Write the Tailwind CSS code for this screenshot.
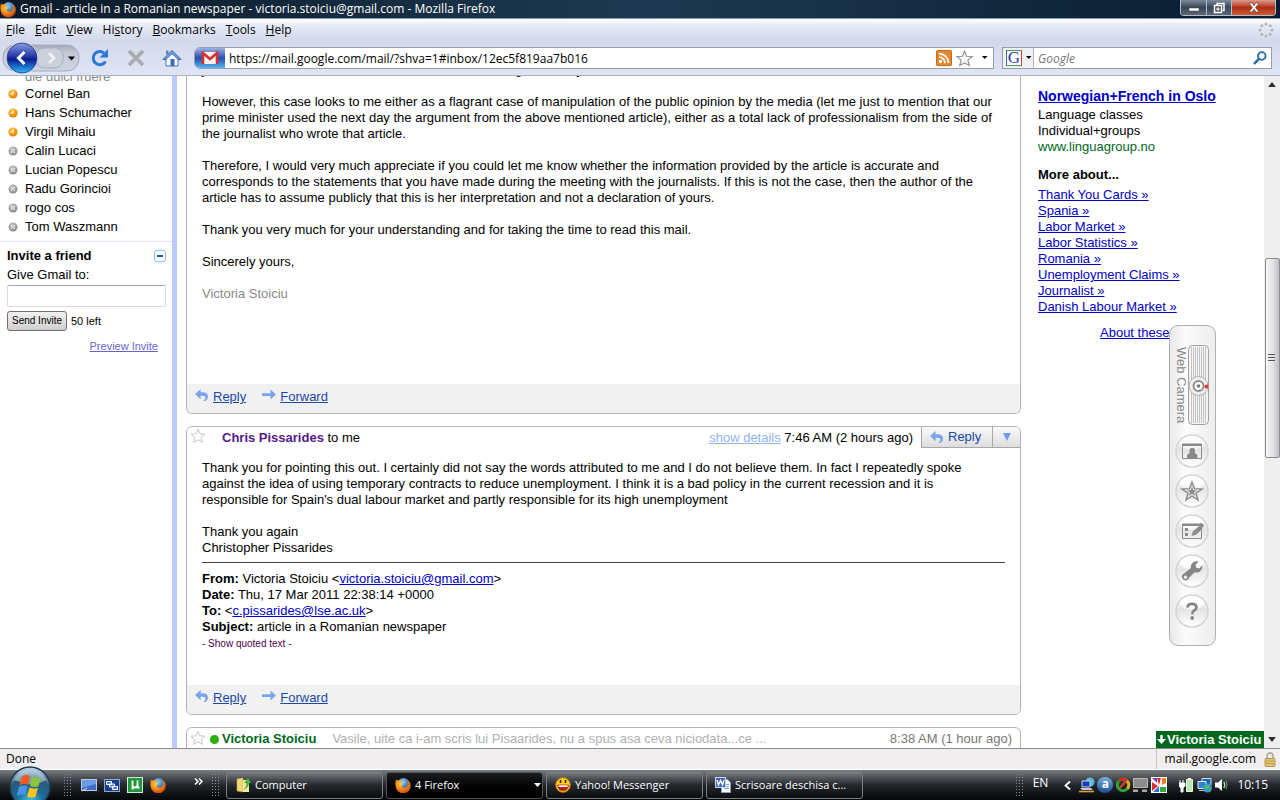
<!DOCTYPE html>
<html lang="en">
<head>
  <meta charset="UTF-8">
  <title>Gmail - article in a Romanian newspaper - victoria.stoiciu@gmail.com - Mozilla Firefox</title>
  <script src="https://cdn.jsdelivr.net/npm/@tailwindcss/browser@4"></script>
</head>
<body class="h-screen overflow-hidden flex flex-col bg-white text-black font-['Open_Sans',sans-serif] text-[12px]">

  <!-- shared icons -->
  <svg class="absolute size-0" aria-hidden="true">
    <defs>
      <radialGradient id="orange" cx="40%" cy="30%" r="75%"><stop offset="0" stop-color="#ffd23c"/><stop offset=".5" stop-color="#f88a1a"/><stop offset="1" stop-color="#c43c08"/></radialGradient>
      <radialGradient id="globe" cx="45%" cy="30%" r="70%"><stop offset="0" stop-color="#8fd0f5"/><stop offset="1" stop-color="#153a86"/></radialGradient>
      <radialGradient id="away" cx="40%" cy="30%" r="70%"><stop offset="0" stop-color="#ffc23a"/><stop offset="1" stop-color="#e88000"/></radialGradient>
      <radialGradient id="off" cx="40%" cy="30%" r="70%"><stop offset="0" stop-color="#c8c8c8"/><stop offset="1" stop-color="#8a8a8a"/></radialGradient>
      <linearGradient id="glass" x1="0" y1="0" x2="0" y2="1"><stop offset="0" stop-color="#ffffff"/><stop offset=".45" stop-color="#e4e4e4"/><stop offset="1" stop-color="#ffffff"/></linearGradient>
      <symbol id="firefox" viewBox="0 0 16 16">
        <circle cx="8.500" cy="7.500" r="6.500" fill="url(#globe)"/>
        <path d="M1 2.500Q2 3.500 3.500 3.500Q5 3 6.500 3.500Q5.500 4.500 6 5.500Q7 6.500 8.500 6.500Q7.500 8 6.500 8.200Q6.500 10.500 9 10.800Q12.500 11 12.800 7.500Q13.500 8 13.500 8.500Q13.800 5.500 12 3Q15.800 5 15.800 8.500A7.500 7.500 0 0 1 .6 9Q0 5.500 1 2.500Z" fill="url(#orange)"/>
      </symbol>
      <symbol id="star" viewBox="0 0 16 16"><path d="M8 1.200l2 4.600 5 .4-3.800 3.300 1.200 4.900L8 11.800l-4.400 2.600 1.200-4.900L1 6.200l5-.4z" fill="#fcfcfc" stroke="#c8c8c8"/></symbol>
      <symbol id="reply" viewBox="0 0 15 13"><path d="M6 0v3.600h2.500Q14 3.600 14 8.500Q14 11.500 11.300 13H9.200Q11.500 11 11.200 9Q10.900 7.200 8.500 7.200H6V11L0 5.500z" fill="#7aa5ee"/></symbol>
      <symbol id="forward" viewBox="0 0 14 11"><path d="M0 4.200h8.500V0.500L14 5.500 8.500 10.500V7H0z" fill="#7aa5ee"/></symbol>
      <symbol id="away-dot" viewBox="0 0 10 10"><circle cx="5" cy="5" r="4.600" fill="url(#away)"/><path d="M5 1.800V5H2.200" stroke="#fff" fill="none" stroke-width="1.100"/></symbol>
      <symbol id="off-dot" viewBox="0 0 10 10"><circle cx="5" cy="5" r="4.500" fill="url(#off)"/><path d="M3.300 3.300l3.400 3.400M6.700 3.300L3.300 6.700" stroke="#fff" stroke-width="1.100" stroke-dasharray="1.200 .7"/></symbol>
      <symbol id="bubble" viewBox="0 0 34 34">
        <circle cx="17" cy="17" r="16" fill="url(#glass)" stroke="#d6d6d6" stroke-width="1.600"/>
        <ellipse cx="17" cy="9" rx="12" ry="6.500" fill="#fff" opacity=".7"/>
      </symbol>
    </defs>
  </svg>

  <!-- title bar -->
  <header class="h-[19px] shrink-0 flex items-center justify-between bg-gradient-to-r from-[#0c1a28] via-[#1c3a52] to-[#0a1c30] border-b border-[#8b98a8] text-white overflow-hidden">
    <div class="flex items-center gap-1 h-full">
      <svg class="size-4"><use href="#firefox"/></svg>
      <h1 class="leading-[18px]">Gmail - article in a Romanian newspaper - victoria.stoiciu@gmail.com - Mozilla Firefox</h1>
    </div>
    <div class="flex self-start h-4 mr-1 rounded-b-[4px] border border-t-0 border-[#b4bcc6] overflow-hidden">
      <button aria-label="Minimize" class="w-[26px] flex items-center justify-center bg-gradient-to-b from-[#7e8a98] via-[#38465a] to-[#5a6878] border-r border-[#b4bcc6]">
        <svg width="12" height="12"><rect x="1" y="6" width="10" height="3" fill="#fff" stroke="#444" stroke-width=".5"/></svg>
      </button>
      <button aria-label="Restore" class="w-[25px] flex items-center justify-center bg-gradient-to-b from-[#7e8a98] via-[#38465a] to-[#5a6878] border-r border-[#b4bcc6]">
        <svg width="12" height="12" fill="none" stroke="#fff" stroke-width="1.500"><path d="M4 3V1.500h7v7H9.500"/><rect x="1.500" y="3.500" width="7" height="7"/><path d="M4 6h2v2H4z" stroke-width="1"/></svg>
      </button>
      <button aria-label="Close" class="w-[43px] flex items-center justify-center bg-gradient-to-b from-[#dc9a8c] via-[#b02c14] to-[#cc5a34]">
        <svg width="12" height="11"><path d="M1 1h3l2 2.700L8 1h3L7.600 5.500 11 10H8L6 7.300 4 10H1l3.400-4.500z" fill="#fff" stroke="#502018" stroke-width=".5"/></svg>
      </button>
    </div>
  </header>

  <!-- menu -->
  <nav class="h-[22px] shrink-0 flex items-center justify-between pl-[6px] pr-[6px] bg-gradient-to-b from-white via-[#e6eaf6] via-30% to-[#d3d9ec]">
    <div class="flex gap-[10px] leading-4">
      <button><u>F</u>ile</button>
      <button><u>E</u>dit</button>
      <button><u>V</u>iew</button>
      <button>Hi<u>s</u>tory</button>
      <button><u>B</u>ookmarks</button>
      <button><u>T</u>ools</button>
      <button><u>H</u>elp</button>
    </div>
    <svg class="size-4" viewBox="0 0 16 16" fill="#b4b6bc"><circle cx="8" cy="2" r="1.500"/><circle cx="12.200" cy="3.800" r="1.500"/><circle cx="14" cy="8" r="1.500"/><circle cx="12.200" cy="12.200" r="1.500"/><circle cx="8" cy="14" r="1.500"/><circle cx="3.800" cy="12.200" r="1.500"/><circle cx="2" cy="8" r="1.500"/><circle cx="3.800" cy="3.800" r="1.500"/></svg>
  </nav>

  <!-- toolbar -->
  <div class="h-[35px] shrink-0 flex items-center pl-[2px] pr-2 bg-gradient-to-b from-[#d3d9ec] to-[#e0e5f5] border-b border-[#a9b0c4]">
    <div class="flex items-center">
      <svg width="80" height="34" viewBox="0 0 80 34">
        <defs>
          <linearGradient id="back" x1="0" y1="0" x2="0" y2="1"><stop offset="0" stop-color="#8aa0e0"/><stop offset=".45" stop-color="#2438a8"/><stop offset=".55" stop-color="#0a1c90"/><stop offset="1" stop-color="#2cc4ff"/></linearGradient>
          <linearGradient id="pill" x1="0" y1="0" x2="0" y2="1"><stop offset="0" stop-color="#a4aabb"/><stop offset=".3" stop-color="#c2c8d6"/><stop offset="1" stop-color="#cfd5e4"/></linearGradient>
        </defs>
        <rect x="1" y="4" width="76" height="26" rx="12" fill="url(#pill)" stroke="#a6adbe"/>
        <rect x="34" y="7" width="27" height="20" rx="8" fill="#ccd0da" stroke="#aab0be"/>
        <circle cx="20" cy="17" r="15.500" fill="url(#back)" stroke="#e8ecf8" stroke-width="1"/>
        <circle cx="20" cy="17" r="15" fill="none" stroke="#1c2c78" stroke-width=".8"/>
        <path d="M22.500 11l-6 6 6 6" stroke="#fff" stroke-width="3" fill="none"/>
        <path d="M47 12l5 5-5 5" stroke="#eef0f6" stroke-width="3" fill="none"/>
        <path d="M66 15.500h7l-3.500 4z" fill="#000"/>
      </svg>
      <button aria-label="Reload" class="ml-[8px]">
        <svg width="20" height="20" viewBox="0 0 20 20"><path d="M15.500 13.500A6.600 6.600 0 1 1 14 5" fill="none" stroke="#2a78d8" stroke-width="3"/><path d="M18 1v8.500H9.500z" fill="#2a78d8"/></svg>
      </button>
      <button aria-label="Stop" class="ml-[16px]">
        <svg width="20" height="20" viewBox="0 0 20 20"><path d="M3 3l14 14M17 3L3 17" stroke="#a8aaae" stroke-width="3.600"/></svg>
      </button>
      <button aria-label="Home" class="ml-[16px]">
        <svg width="20" height="18" viewBox="0 0 20 18"><path d="M4 8.500L10 3l6 5.500V17H4z" fill="#fff" stroke="#4a72b8"/><path d="M4 1.500h2.500v4H4z" fill="#5a86c8"/><path d="M.8 10.500L10 1.500l9.200 9h-3L10 4.800l-6.200 5.700z" fill="#6aa0de" stroke="#2c5ca8" stroke-width=".8"/><path d="M8.500 10h4v7h-4z" fill="#3c6cb4"/></svg>
      </button>
    </div>
    <div class="flex flex-1 items-center h-[22px] ml-3 bg-white border border-[#9a9ea8] rounded-l-[6px] overflow-hidden">
      <div class="w-[30px] h-full flex items-center justify-center bg-gradient-to-b from-[#9cb0e0] via-[#2a4cb0] to-[#58b4ee]">
        <svg width="18" height="14" viewBox="0 0 18 14"><rect x="1" y="1" width="16" height="12" rx="1" fill="#f4f4f4"/><path d="M2 13V2l7 6 7-6v11" fill="none" stroke="#d8302c" stroke-width="2.600"/></svg>
      </div>
      <input type="text" aria-label="Address" value="https://mail.google.com/mail/?shva=1#inbox/12ec5f819aa7b016" class="flex-1 min-w-0 h-full pl-1 leading-5 outline-none">
      <svg width="16" height="16" viewBox="0 0 16 16"><rect width="16" height="16" rx="2" fill="#e8862c"/><rect x=".5" y=".5" width="15" height="15" rx="2" fill="none" stroke="#c8681c"/><circle cx="4.500" cy="11.500" r="1.700" fill="#fff"/><path d="M3 7.200a6 6 0 0 1 6 6M3 3.600a9.500 9.500 0 0 1 9.500 9.500" fill="none" stroke="#fff" stroke-width="1.800"/></svg>
      <svg class="ml-1" width="17" height="17" viewBox="0 0 16 16"><path d="M8 1l2 4.800 5.200.4-4 3.400 1.300 5L8 12l-4.500 2.600 1.300-5-4-3.400L6 5.800z" fill="#f6f6f6" stroke="#8a8c90"/></svg>
      <svg class="ml-[9px] mr-[5px]" width="6" height="4"><path d="M0 0h5.500L2.700 3z"/></svg>
    </div>
    <div class="flex items-center w-[270px] h-[22px] ml-2 bg-white border border-[#9a9ea8]">
      <button class="flex items-center gap-1 w-[31px] h-full pl-[3px] bg-[#f0f1f5] border-r border-[#b0b4bc]" aria-label="Search engine">
        <span class="size-4 shrink-0 bg-white border border-t-[#4a9c50] border-l-[#3a6cc8] border-r-[#c83c3c] border-b-[#4a9c50] font-['Liberation_Serif',serif] text-[17px] leading-[14px] text-[#1c3cb0]">G</span>
        <svg width="6" height="4"><path d="M0 0h5.500L2.700 3z"/></svg>
      </button>
      <input type="text" aria-label="Search" placeholder="Google" class="flex-1 min-w-0 h-full pl-1 leading-5 outline-none italic placeholder:text-[#777777]">
      <svg class="mr-1" width="14" height="14" viewBox="0 0 14 14"><circle cx="8.800" cy="5" r="3.800" fill="#eef6fc" stroke="#2c6ca8" stroke-width="1.800"/><path d="M6 7.800L1 12.800" stroke="#2c6ca8" stroke-width="2.600"/></svg>
    </div>
  </div>

  <!-- page -->
  <div class="relative flex-1 min-h-0 flex overflow-hidden font-['Liberation_Sans',sans-serif] text-[13px] leading-4">

    <aside class="w-[177px] shrink-0 border-r-[5px] border-[#bccbff]">
      <ul class="-mt-2 leading-[19px] pb-[5px] border-b border-[#dfe8f6]">
        <li class="pl-[25px] h-4 leading-[18px] text-[#888888]">die dulci fruere</li>
        <li class="flex items-center gap-[7px] pl-2"><svg class="size-[10px]"><use href="#away-dot"/></svg>Cornel Ban</li>
        <li class="flex items-center gap-[7px] pl-2"><svg class="size-[10px]"><use href="#away-dot"/></svg>Hans Schumacher</li>
        <li class="flex items-center gap-[7px] pl-2"><svg class="size-[10px]"><use href="#away-dot"/></svg>Virgil Mihaiu</li>
        <li class="flex items-center gap-[7px] pl-2"><svg class="size-[10px]"><use href="#off-dot"/></svg>Calin Lucaci</li>
        <li class="flex items-center gap-[7px] pl-2"><svg class="size-[10px]"><use href="#off-dot"/></svg>Lucian Popescu</li>
        <li class="flex items-center gap-[7px] pl-2"><svg class="size-[10px]"><use href="#off-dot"/></svg>Radu Gorincioi</li>
        <li class="flex items-center gap-[7px] pl-2"><svg class="size-[10px]"><use href="#off-dot"/></svg>rogo cos</li>
        <li class="flex items-center gap-[7px] pl-2"><svg class="size-[10px]"><use href="#off-dot"/></svg>Tom Waszmann</li>
      </ul>
      <form class="pl-[7px] pr-[6px] pt-[6px]">
        <div class="flex items-center justify-between">
          <h2 class="font-bold leading-4">Invite a friend</h2>
          <button type="button" aria-label="Collapse" class="size-3 flex items-center justify-center border border-[#9dbdf0] rounded-[2px]"><span class="w-[6px] h-[2px] bg-[#0a5cd8]"></span></button>
        </div>
        <label for="invite" class="block mt-[3px] leading-4">Give Gmail to:</label>
        <input id="invite" type="text" class="block w-full h-[22px] mt-[2px] px-1 border border-[#d8dadc] border-t-[#a4a8ac] rounded-[2px]">
        <div class="flex items-center gap-1 mt-1 text-[11px]">
          <button type="button" class="w-[60px] h-5 border border-[#707070] rounded-[3px] bg-gradient-to-b from-[#f2f2f2] to-[#cfcfcf] text-[10px]">Send Invite</button>
          <span>50 left</span>
        </div>
        <a href="#" class="block mt-[7px] mr-2 text-right text-[11px] underline text-[#6666cc]">Preview Invite</a>
      </form>
    </aside>

    <main class="flex-1 min-w-0 pl-[9px] pr-[17px]">
      <article class="border border-t-0 border-[#b4b4b4] rounded-b-[6px] overflow-hidden">
        <div class="-mt-[14px] px-[15px] h-[322px]">
          <p>journalist wrote that this was a statement in the meeting about any</p>
          <p class="mt-4">However, this case looks to me either as a flagrant case of manipulation of the public opinion by the media (let me just to mention that our<br>prime minister used the next day the argument from the above mentioned article), either as a total lack of professionalism from the side of<br>the journalist who wrote that article.</p>
          <p class="mt-4">Therefore, I would very much appreciate if you could let me know whether the information provided by the article is accurate and<br>corresponds to the statements that you have made during the meeting with the journalists. If this is not the case, then the author of the<br>article has to assume publicly that this is her interpretation and not a declaration of yours.</p>
          <p class="mt-4">Thank you very much for your understanding and for taking the time to read this mail.</p>
          <p class="mt-4">Sincerely yours,</p>
          <p class="mt-4 text-[#888888]">Victoria Stoiciu</p>
        </div>
        <div class="flex h-[29px] pt-1 pl-2 bg-[#f1f1f1] text-[#1b4aa8]">
          <a href="#" class="flex gap-1"><svg class="mt-px" width="14" height="12"><use href="#reply"/></svg><span class="underline leading-[17px]">Reply</span></a>
          <a href="#" class="flex gap-1 ml-4"><svg class="mt-px" width="14" height="11"><use href="#forward"/></svg><span class="underline leading-[17px]">Forward</span></a>
        </div>
      </article>

      <article class="mt-3 border border-[#b4b4b4] rounded-[6px] overflow-hidden">
        <div class="flex h-[21px] pl-[3px]">
          <svg class="mt-[1px] size-4"><use href="#star"/></svg>
          <h3 class="ml-4 leading-[21px]"><b class="text-[#551a8b]">Chris Pissarides</b> to me</h3>
          <span class="ml-auto mr-2 leading-[21px]"><a href="#" class="underline text-[#8fb4ee]">show details</a> 7:46 AM (2 hours ago)</span>
          <button class="flex items-center gap-1 w-[71px] pl-2 border-l border-b border-[#a8a8a8] bg-gradient-to-b from-[#fafafa] to-[#dedede] text-[#1b4aa8]"><svg width="14" height="12"><use href="#reply"/></svg>Reply</button>
          <button aria-label="More" class="w-7 flex items-center justify-center border-l border-b border-[#a8a8a8] bg-gradient-to-b from-[#fafafa] to-[#dedede]"><svg width="8" height="8"><path d="M0 0h8L4 8z" fill="#6c9cf0"/></svg></button>
        </div>
        <div class="px-[15px] pt-3 h-[237px]">
          <p>Thank you for pointing this out. I certainly did not say the words attributed to me and I do not believe them. In fact I repeatedly spoke<br>against the idea of using temporary contracts to reduce unemployment. I think it is a bad policy in the current recession and it is<br>responsible for Spain's dual labour market and partly responsible for its high unemployment</p>
          <p class="mt-4">Thank you again<br>Christopher Pissarides</p>
          <hr class="mt-[6px] mb-2 border-[#444444]">
          <p><b>From:</b> Victoria Stoiciu &lt;<a href="#" class="underline text-[#0000cc]">victoria.stoiciu@gmail.com</a>&gt;<br><b>Date:</b> Thu, 17 Mar 2011 22:38:14 +0000<br><b>To:</b> &lt;<a href="#" class="underline text-[#0000cc]">c.pissarides@lse.ac.uk</a>&gt;<br><b>Subject:</b> article in a Romanian newspaper</p>
          <button class="block text-[10px] leading-[18px] text-[#500050]">- Show quoted text -</button>
        </div>
        <div class="flex h-[29px] pt-1 pl-2 bg-[#f1f1f1] text-[#1b4aa8]">
          <a href="#" class="flex gap-1"><svg class="mt-px" width="14" height="12"><use href="#reply"/></svg><span class="underline leading-[17px]">Reply</span></a>
          <a href="#" class="flex gap-1 ml-4"><svg class="mt-px" width="14" height="11"><use href="#forward"/></svg><span class="underline leading-[17px]">Forward</span></a>
        </div>
      </article>

      <article class="mt-3 h-10 flex border border-[#b4b4b4] rounded-t-[6px] pl-[3px] pr-2 leading-[22px]">
        <svg class="mt-[2px] size-4"><use href="#star"/></svg>
        <span class="ml-1 mt-[7px] size-[9px] rounded-full bg-[#2ab010]"></span>
        <b class="ml-[3px] text-[#00681c]">Victoria Stoiciu</b>
        <span class="ml-4 text-[#b0b0b0]">Vasile, uite ca i-am scris lui Pisaarides, nu a spus asa ceva niciodata...ce ...</span>
        <span class="ml-auto text-[#777777]">8:38 AM (1 hour ago)</span>
      </article>
    </main>

    <aside class="w-[226px] shrink-0 pt-3 overflow-hidden text-[#0000cc]">
      <a href="#" class="block mb-[3px] font-bold text-[14px] underline">Norwegian+French in Oslo</a>
      <p class="text-black">Language classes<br>Individual+groups</p>
      <p class="text-[#00681c]">www.linguagroup.no</p>
      <h2 class="mt-3 mb-1 font-bold text-black">More about...</h2>
      <ul class="underline">
        <li><a href="#">Thank You Cards »</a></li>
        <li><a href="#">Spania »</a></li>
        <li><a href="#">Labor Market »</a></li>
        <li><a href="#">Labor Statistics »</a></li>
        <li><a href="#">Romania »</a></li>
        <li><a href="#">Unemployment Claims »</a></li>
        <li><a href="#">Journalist »</a></li>
        <li><a href="#">Danish Labour Market »</a></li>
      </ul>
      <a href="#" class="block mt-[10px] ml-[62px] underline">About these</a>
    </aside>

    <!-- scrollbar -->
    <div class="w-4 shrink-0 flex flex-col items-center bg-[#efefef]">
      <svg class="mt-[6px]" width="8" height="5"><path d="M0 5h8L4 0z" fill="#333"/></svg>
      <div class="w-[15px] h-[200px] mt-[171px] flex items-center justify-center border border-[#8e8e8e] rounded-[2px] bg-gradient-to-r from-[#f6f6f6] via-[#e4e4e6] to-[#bfc0c4]">
        <svg width="8" height="8" stroke="#555"><path d="M0 .5h7M0 3.500h7M0 6.500h7"/></svg>
      </div>
      <svg class="mt-auto mb-[6px]" width="8" height="5"><path d="M0 0h8L4 5z" fill="#333"/></svg>
    </div>

    <!-- webcam panel floating over the page -->
    <div class="absolute right-16 top-[249px] w-[47px] h-[321px] pr-[2px] flex flex-col items-center border border-[#b0b0b0] rounded-[9px] bg-gradient-to-r from-[#e9e9e9] via-[#fcfcfc] via-35% to-[#ededed]">
      <div class="flex items-center mt-[19px] h-20">
        <span class="[writing-mode:vertical-rl] text-[13px] leading-[14px] text-[#888888]">Web Camera</span>
        <svg width="21" height="80" viewBox="0 0 21 80">
          <rect x=".5" y=".5" width="20" height="79" rx="4" fill="#f4f4f4" stroke="#a0a0a0"/>
          <path d="M3.500 2v76M5.500 2v76M7.500 2v76M9.500 2v76M11.500 2v76M13.500 2v76M15.500 2v76M17.500 2v76" stroke="#c4c4c4"/>
          <circle cx="10.500" cy="41" r="9.500" fill="#eeeeee" stroke="#b0b0b0"/>
          <circle cx="10.500" cy="41" r="5" fill="#fff" stroke="#8a8a8a" stroke-width="1.800"/>
          <circle cx="10.500" cy="41" r="1.700" fill="#777"/>
          <circle cx="18.500" cy="41.500" r="2" fill="#f03030"/>
        </svg>
      </div>
      <div class="flex flex-col gap-[6px] mt-[9px]">
        <button aria-label="Snapshot"><svg class="block" width="34" height="34" viewBox="0 0 34 34"><use href="#bubble"/><path d="M7.500 10.500h19v14h-19z" fill="none" stroke="#8a8a8a"/><path d="M7 9.500h20v2.500H7zM12 24.500v-3.500l2.500-2v-3a2.800 2.800 0 0 1 5.500 0v3l2.500 2v3.500z" fill="#8a8a8a"/></svg></button>
        <button aria-label="Effects"><svg class="block" width="34" height="34" viewBox="0 0 34 34"><use href="#bubble"/><path d="M17 8l2.500 6.600 7.500.4-6 4.300 2 6.700-6-3.800-6 3.800 2-6.700-6-4.300 7.500-.4z" fill="#e8e8e8" stroke="#8a8a8a" stroke-width="1.400"/><path d="M17 12.500l1.300 3.800h3.600L19 18.500l1.200 3.500-3.200-2.200-3.200 2.200 1.200-3.500-2.900-2.200h3.600z" fill="#8a8a8a"/></svg></button>
        <button aria-label="Edit"><svg class="block" width="34" height="34" viewBox="0 0 34 34"><use href="#bubble"/><path d="M7.500 10.500h19v14h-19z" fill="none" stroke="#8a8a8a"/><path d="M7 9.500h19v2.500H7zM10 14h3v3h-3zM10 19h3v3h-3z" fill="#8a8a8a"/><path d="M16 22.500l1.500-5 7-6 3.500 3.500-7 6z" fill="#8a8a8a" stroke="#eee" stroke-width=".6"/><circle cx="26.500" cy="11.500" r="2.200" fill="#8a8a8a"/></svg></button>
        <button aria-label="Settings"><svg class="block" width="34" height="34" viewBox="0 0 34 34"><use href="#bubble"/><path d="M23.500 7.500l-3 3.500.8 2.800 3 .7 2.900-3.200a6 6 0 0 1-7.600 7l-5.500 5.500a3.700 3.700 0 1 1-4.600-4.600l6.300-5.200a6 6 0 0 1 7.700-6.500z" fill="#858585"/><circle cx="10.500" cy="23.200" r="1.700" fill="#f4f4f4"/></svg></button>
        <button aria-label="Help"><svg class="block" width="34" height="34" viewBox="0 0 34 34"><use href="#bubble"/><path d="M12.500 13.500Q12.800 9.800 17 9.800T21.500 13.300Q21.500 15 19.300 16.400Q17.200 17.600 17.200 20.200" fill="none" stroke="#858585" stroke-width="2.800"/><circle cx="17.200" cy="24" r="1.900" fill="#858585"/></svg></button>
      </div>
    </div>

    <!-- chat tab -->
    <button class="absolute bottom-0 right-4 w-[108px] h-[17px] flex items-center gap-[1px] pl-[1px] overflow-hidden bg-[#00681c] text-white font-bold whitespace-nowrap"><svg class="shrink-0" width="9" height="9"><path d="M3.300 0h2.400v4H9L4.500 9 0 4h3.300z" fill="#fff"/></svg>Victoria Stoiciu</button>
  </div>

  <!-- status bar -->
  <div class="h-[22px] shrink-0 flex items-stretch justify-between bg-[#f0eeee] border-t border-[#8c8c8c] border-b border-b-white leading-5 pl-[6px] pr-1">
    <span>Done</span>
    <div class="flex items-center gap-2 pl-2 border-l border-[#c8c6c6]">
      <span>mail.google.com</span>
      <svg width="12" height="15" viewBox="0 0 12 15"><path d="M3 7V4a3 3 0 0 1 6 0v3" fill="none" stroke="#b8b09a" stroke-width="1.800"/><rect x="1" y="6.500" width="10" height="8" rx="1" fill="#e0c070" stroke="#a88840" stroke-width=".8"/><path d="M1.500 9h9M1.500 11.500h9" stroke="#b89850" stroke-width=".8"/></svg>
    </div>
  </div>

  <!-- taskbar -->
  <footer class="relative h-[30px] shrink-0 flex items-center justify-between pr-3 bg-gradient-to-b from-[#7a7e82] via-[#24282c] via-50% to-[#050608] text-white">
    <div class="flex items-center">
      <button aria-label="Start" class="ml-2 w-11 h-[30px]">
        <svg class="absolute bottom-[-8px]" width="44" height="42" viewBox="0 0 44 42">
          <defs><radialGradient id="orb" cx="50%" cy="90%" r="85%"><stop offset="0" stop-color="#40d0e8"/><stop offset=".4" stop-color="#1c6c9c"/><stop offset=".75" stop-color="#2a5878"/><stop offset="1" stop-color="#b4d0e0"/></radialGradient></defs>
          <circle cx="22" cy="21" r="20" fill="url(#orb)" stroke="#20384c" stroke-width="1.500"/>
          <path d="M6 14Q12 3.500 22 3.500T38 14Q30 19 22 18T6 14z" fill="#cfe4f0" opacity=".5"/>
          <path d="M14 10.500q4-2.500 8-.5l-2 9q-4-2-8.500.5z" fill="#ee5a24"/>
          <path d="M24 11q4 2 9 0l-2.500 9q-4.500 2-8.500-.3z" fill="#8cc43c"/>
          <path d="M11 21q4-2.500 8.500-.5l-2.300 9q-4-2-8.500.5z" fill="#4a94e8"/>
          <path d="M21.500 21.500q4 2 8.500.2l-2.500 9q-4 2-8.500-.3z" fill="#fcc41c"/>
        </svg>
      </button>
      <svg class="ml-[11px]" width="10" height="22" stroke="#8a8e92" stroke-dasharray="1 2"><path d="M1.500 0v22M4.500 0v22M7.500 0v22"/></svg>
      <svg class="ml-2" width="16" height="13"><rect x=".5" y=".5" width="15" height="11" fill="#3c6cc4" stroke="#b8c8e0"/><path d="M1 1h14v4L1 9z" fill="#6c9ce4"/><path d="M1 12l5-3" stroke="#ddd"/></svg>
      <svg class="ml-[7px]" width="16" height="13"><rect x=".5" y=".5" width="15" height="12" fill="#1c3c88" stroke="#88a8d8"/><path d="M2.500 2.500h5v3h-5zM5.500 5h5v3h-5zM8.500 7.500h5v3h-5z" fill="#4c7cd0" stroke="#fff"/></svg>
      <svg class="ml-[7px]" width="16" height="16"><rect x=".5" y=".5" width="15" height="15" fill="#1c9838" stroke="#d8e8d8"/><path d="M5.500 3.500v9M5.500 8.500q0 2 2.300 2t2.700-2.500V3.500v7h2" fill="none" stroke="#fff" stroke-width="1.800"/></svg>
      <svg class="ml-[7px] size-4"><use href="#firefox"/></svg>
      <svg class="ml-7 -mt-2" width="9" height="7" fill="none" stroke="#fff" stroke-width="1.500"><path d="M1 .5l3 3-3 3M5 .5l3 3-3 3"/></svg>
      <svg class="ml-2" width="10" height="22" stroke="#8a8e92" stroke-dasharray="1 2"><path d="M1.500 0v22M4.500 0v22M7.500 0v22"/></svg>
      <div class="flex gap-[3px] ml-[5px] text-[11px]">
        <button class="flex items-center gap-1 w-[157px] h-[27px] px-2 rounded-[3px] border border-[#7c8084] bg-gradient-to-b from-[#74787c] via-[#24282c] via-50% to-[#0c0e10]">
          <svg width="16" height="16"><path d="M2 2l6-1v14l-6-1z" fill="#f0d878" stroke="#c8a848" stroke-width=".6"/><path d="M8 3h6v12H8z" fill="#f8e8a0"/><path d="M8 13q4-3 3-7H9l4-5 3 5h-2q0 5-6 7z" fill="#48b838"/></svg>Computer
        </button>
        <button class="flex items-center gap-1 w-[157px] h-[27px] pl-2 rounded-[3px] border border-[#505458] bg-gradient-to-b from-[#1c1e20] to-[#000000]">
          <svg class="size-4"><use href="#firefox"/></svg>4 Firefox
          <svg class="ml-auto" width="8" height="5"><path d="M0 0h7L3.500 4z" fill="#fff"/></svg>
        </button>
        <button class="flex items-center gap-1 w-[157px] h-[27px] px-2 rounded-[3px] border border-[#7c8084] bg-gradient-to-b from-[#74787c] via-[#24282c] via-50% to-[#0c0e10]">
          <svg width="16" height="16"><circle cx="8" cy="8" r="7.300" fill="#fcd020" stroke="#c87808"/><path d="M2.500 8h11q-.5 5.500-5.500 5.500T2.500 8z" fill="#c81c1c" stroke="#701010" stroke-width=".6"/><path d="M3.300 8.300h9.400v1.700H3.300z" fill="#fff"/><path d="M5.500 3v3M10.500 3v3" stroke="#402000" stroke-width="1.600"/></svg>Yahoo! Messenger
        </button>
        <button class="flex items-center gap-1 w-[157px] h-[27px] px-2 rounded-[3px] border border-[#7c8084] bg-gradient-to-b from-[#74787c] via-[#24282c] via-50% to-[#0c0e10] whitespace-nowrap">
          <svg width="16" height="16"><path d="M6.500 2.500h6l3 3v10h-9z" fill="#fff" stroke="#88a0d0"/><path d="M9 7.500h5M9 9.500h5M9 11.500h5" stroke="#88a0d0"/><rect x=".5" y=".5" width="10" height="10" fill="#3c64b8" stroke="#c8d8f4"/><path d="M2 3l1.500 5L5.500 3.500 7.500 8 9 3" fill="none" stroke="#fff" stroke-width="1.400"/></svg>Scrisoare deschisa c...
        </button>
      </div>
    </div>
    <div class="flex items-center">
      <svg width="10" height="22" stroke="#8a8e92" stroke-dasharray="1 2"><path d="M1.500 0v22M4.500 0v22M7.500 0v22"/></svg>
      <span class="ml-2 text-[12px] leading-4 pb-1">EN</span>
      <svg class="ml-4" width="7" height="9"><path d="M6 .5l-4.500 4 4.500 4" fill="none" stroke="#fff" stroke-width="1.800"/></svg>
      <svg class="ml-2" width="16" height="16"><circle cx="11" cy="5" r="4.500" fill="#50c0d8"/><path d="M3 4h8v6H3z" fill="#1c3cc0" stroke="#c8d4e8"/><path d="M1 11h11l2 2H3z" fill="#c0c8d8"/><path d="M0 14.500h15" stroke="#e0a030" stroke-width="1.600"/></svg>
      <span class="ml-[2px] size-4 rounded-full bg-gradient-to-b from-[#7cb0e0] to-[#1c4c90] text-center font-bold leading-[14px]">a</span>
      <svg class="ml-[2px]" width="16" height="16" fill="none" stroke-width="3"><path d="M8 2.500A5.500 5.500 0 0 1 12 12" stroke="#e0b020"/><path d="M12 12A5.500 5.500 0 0 1 4 4" stroke="#28a838"/><path d="M4 4a5.500 5.500 0 0 1 8-.2" stroke="#d82c20"/><path d="M4.500 11l6-6" stroke="#e83c28" stroke-width="2"/></svg>
      <svg class="ml-[2px]" width="15" height="14"><path d="M.5 .5h14v9H.5z" fill="#8c8c8c" stroke="#b8b8b8"/><path d="M0 11.500h5v2.500H0zM9 11.500h5v2.500H9z" fill="#a8a8a8"/></svg>
      <svg class="ml-[3px]" width="16" height="16"><rect width="16" height="16" fill="#fff"/><path d="M1 1h5v5z" fill="#8838c0"/><path d="M6 1h4L8 8z" fill="#e02828"/><path d="M11 1h4v5l-4 2z" fill="#f08020"/><path d="M1 5l6 4-6 5z" fill="#e03030"/><path d="M2 15l6-6v6z" fill="#3070e0"/><path d="M9 10h6v5H9z" fill="#38a840"/></svg>
      <svg class="ml-3" width="16" height="16"><path d="M7.500 2.500h6v12h-6z" fill="#b8e8b0" stroke="#e8f0e8"/><path d="M9 1h3v2H9z" fill="#fff"/><path d="M1 3v3M4 3v3M0 6h6v3l-2 2v4H2v-4L0 9z" stroke="#fff" fill="#fff"/></svg>
      <svg class="ml-[2px]" width="16" height="16"><path d="M5 1.500h9v7H5z" fill="#1c64b8" stroke="#c8e0f4"/><path d="M1 4.500h8v7H1z" fill="#2c84d0" stroke="#e8f4fc"/><path d="M2 13.500h6" stroke="#ccc"/><circle cx="10.500" cy="11" r="4.500" fill="#3898d8"/><path d="M8 9q3-2 4 0t-2 3-2-3zM12 12l2 1-2 2z" fill="#58c040"/></svg>
      <svg class="ml-[2px]" width="14" height="14"><path d="M0 4.500h3L7 1v12L3 9.500H0z" fill="#fff"/><path d="M9 4q1.500 3 0 6" stroke="#ccc" fill="none" stroke-width="1.400"/><path d="M11 3q2 4 0 8" stroke="#48b848" fill="none"/></svg>
      <span class="ml-2">10:15</span>
    </div>
  </footer>

</body>
</html>
